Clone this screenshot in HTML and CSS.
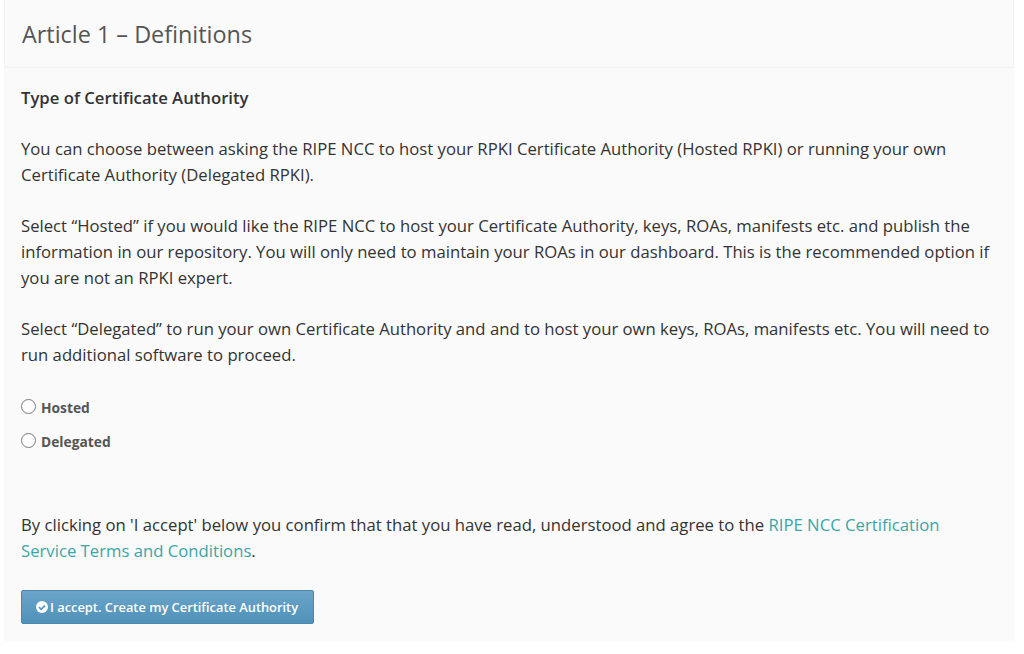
FILE: index.html
```html
<!DOCTYPE html>
<html lang="en">
<head>
    <meta charset="UTF-8">
    <title>Article 1 – Definitions</title>
    <link rel="stylesheet" href="styles.css">
</head>
<body>
    <div class="panel">
        <div class="panel-header">
            <h2>Article 1 – Definitions</h2>
        </div>
        <div class="panel-body">
            <p class="section-title">Type of Certificate Authority</p>
            <p>You can choose between asking the RIPE NCC to host your RPKI Certificate Authority (Hosted RPKI) or running your own Certificate Authority (Delegated RPKI).</p>
            <p>Select “Hosted” if you would like the RIPE NCC to host your Certificate Authority, keys, ROAs, manifests etc. and publish the information in our repository. You will only need to maintain your ROAs in our dashboard. This is the recommended option if you are not an RPKI expert.</p>
            <p>Select “Delegated” to run your own Certificate Authority and and to host your own keys, ROAs, manifests etc. You will need to run additional software to proceed.</p>
            <div class="radios">
                <label class="radio"><input type="radio" name="ca"> Hosted</label>
                <label class="radio"><input type="radio" name="ca"> Delegated</label>
            </div>
            <p class="terms">By clicking on 'I accept' below you confirm that that you have read, understood and agree to the <a href="#">RIPE NCC Certification Service Terms and Conditions</a>.</p>
            <button class="btn" type="button">
                <svg class="btn-icon" viewBox="0 0 16 16" width="12" height="12">
                    <circle cx="8" cy="8" r="8" fill="#fff"/>
                    <path d="M4 8.2l2.9 2.9L12 6" fill="none" stroke="#5b9bc3" stroke-width="2.4"/>
                </svg>
                I accept. Create my Certificate Authority
            </button>
        </div>
    </div>
</body>
</html>
```

FILE: styles.css
```css
body {
    margin: 0;
    background: #fff;
    font-family: "Open Sans", sans-serif;
    font-size: 16.7px;
    line-height: 26px;
    color: #333;
}

.panel {
    margin: 0 10px 0 4px;
    height: 641px;
    background: #fafafa;
}

.panel-header {
    height: 68px;
    padding: 0 17px;
    box-sizing: border-box;
    display: flex;
    align-items: center;
    border: 1px solid #f2f2f2;
    border-top: none;
}

h2 {
    margin: 0;
    font-size: 23.4px;
    font-weight: 400;
    color: #555;
}

.panel-body {
    padding: 17px 17px 0;
}

p {
    margin: 0 0 25px;
}

.section-title {
    font-weight: 600;
}

.radios {
    margin: -2px 0 53px;
}

.radio {
    display: flex;
    align-items: center;
    height: 34px;
    gap: 5px;
    font-size: 13.8px;
    font-weight: 700;
    color: #555;
}

.radio input {
    margin: 0;
    width: 15px;
    height: 15px;
    position: relative;
    top: -2px;
}

.terms {
    margin-bottom: 26px;
}

a {
    color: #3ba6a6;
    text-decoration: none;
}

.btn {
    display: flex;
    align-items: center;
    gap: 2px;
    height: 34px;
    padding: 0 15px 0 14px;
    background: linear-gradient(#6ba5c9, #5091b9);
    border: 1px solid #4a87ad;
    border-radius: 2px;
    color: #fff;
    font-family: inherit;
    font-size: 12.85px;
    font-weight: 600;
}
```
